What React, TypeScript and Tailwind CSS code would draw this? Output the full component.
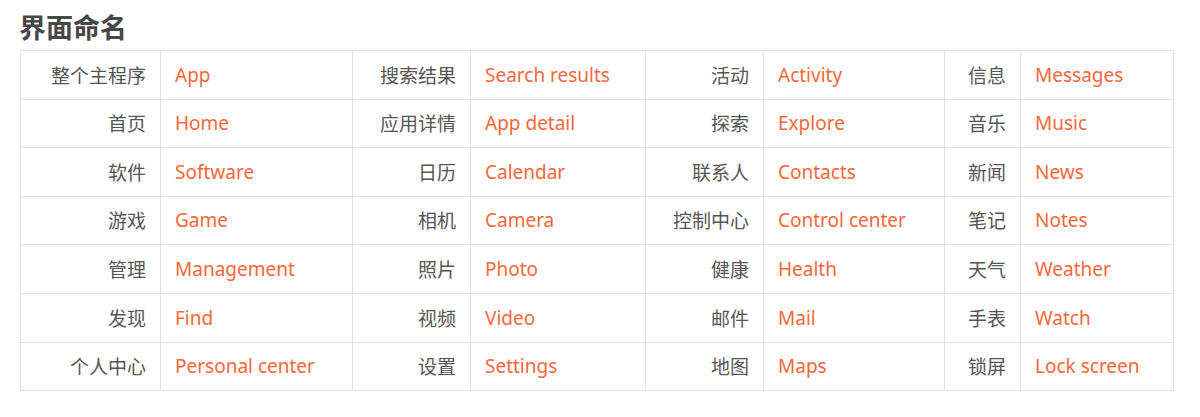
import React from 'react';

const rows: string[][] = [
  ['整个主程序', 'App', '搜索结果', 'Search results', '活动', 'Activity', '信息', 'Messages'],
  ['首页', 'Home', '应用详情', 'App detail', '探索', 'Explore', '音乐', 'Music'],
  ['软件', 'Software', '日历', 'Calendar', '联系人', 'Contacts', '新闻', 'News'],
  ['游戏', 'Game', '相机', 'Camera', '控制中心', 'Control center', '笔记', 'Notes'],
  ['管理', 'Management', '照片', 'Photo', '健康', 'Health', '天气', 'Weather'],
  ['发现', 'Find', '视频', 'Video', '邮件', 'Mail', '手表', 'Watch'],
  ['个人中心', 'Personal center', '设置', 'Settings', '地图', 'Maps', '锁屏', 'Lock screen'],
];

const widths = ['w-[140px]', 'w-[192px]', 'w-[118px]', 'w-[175px]', 'w-[118px]', 'w-[181px]', 'w-[76px]', 'w-[153px]'];

export default function App() {
  return (
    <div className="bg-white h-[417px] px-5 pt-[8px] font-['Segoe_UI','Noto_Sans','Noto_Sans_CJK_SC',sans-serif]">
      <h1 className="text-[27px] leading-[38px] font-bold text-[#474747] -ml-[1px] font-['Noto_Sans_CJK_SC',sans-serif]">界面命名</h1>
      <table className="mt-[4px] border-collapse table-fixed w-[1154px] text-[19px]">
        <colgroup>
          {widths.map((w, i) => (
            <col key={i} className={w} />
          ))}
        </colgroup>
        <tbody>
          {rows.map((row, r) => (
            <tr key={r} className="h-[48.6px]">
              {row.map((cell, c) =>
                c % 2 === 0 ? (
                  <td
                    key={c}
                    className="border border-[#e2e2e2] text-right pr-[14px] text-[#555] font-['Noto_Sans_CJK_SC',sans-serif] p-0"
                  >
                    {cell}
                  </td>
                ) : (
                  <td key={c} className="border border-[#e2e2e2] text-left pl-[14px] text-[#f7673b] p-0">
                    {cell}
                  </td>
                )
              )}
            </tr>
          ))}
        </tbody>
      </table>
    </div>
  );
}
